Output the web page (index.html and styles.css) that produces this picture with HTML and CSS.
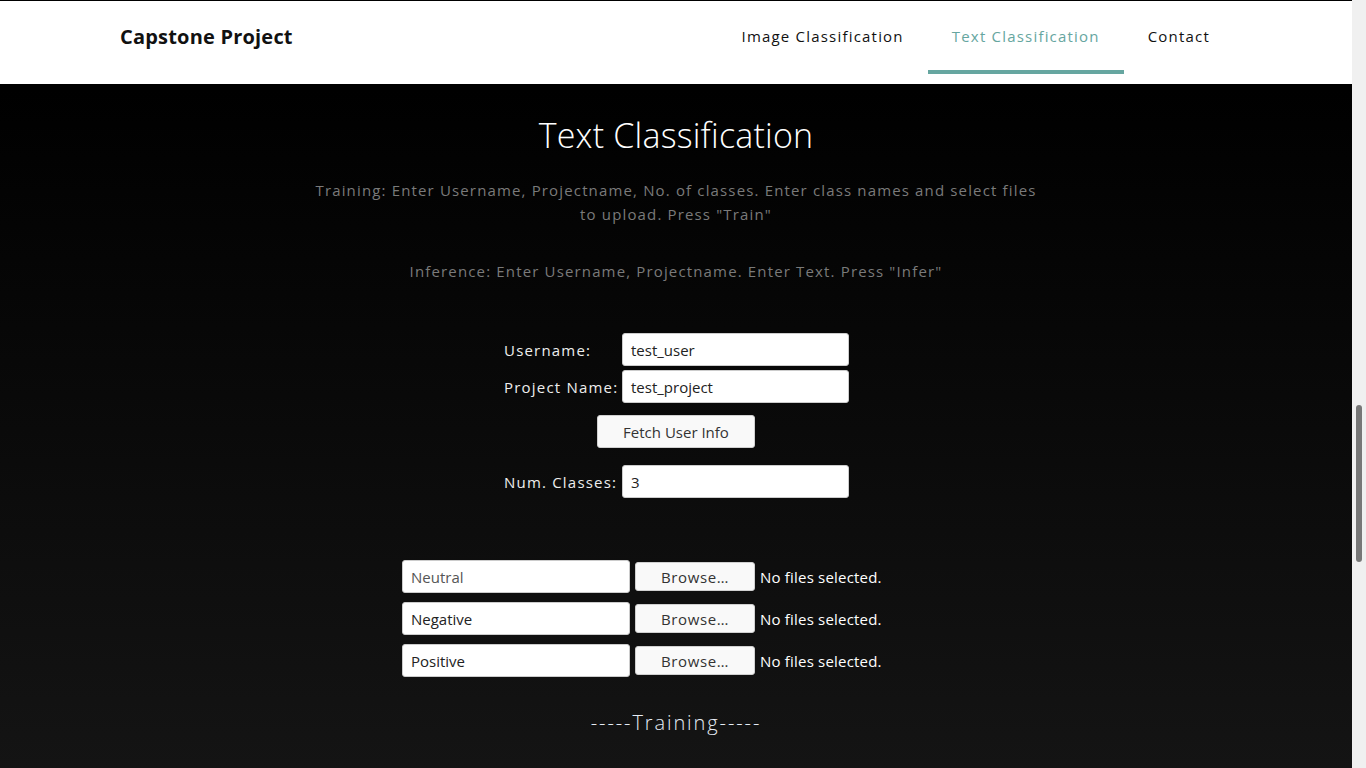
FILE: index.html
```html
<!DOCTYPE html>
<html lang="en">
<head>
<meta charset="utf-8">
<title>Text Classification</title>
<link rel="stylesheet" href="styles.css">
</head>
<body>
<div class="page">
  <header class="topbar">
    <div class="brand">Capstone Project</div>
    <nav class="nav">
      <a class="nav-item">Image Classification</a>
      <a class="nav-item active">Text Classification</a>
      <a class="nav-item">Contact</a>
    </nav>
  </header>
  <main class="content">
    <h1 class="title">Text Classification</h1>
    <p class="desc">Training: Enter Username, Projectname, No. of classes. Enter class names and select files to upload. Press "Train"</p>
    <p class="desc desc-infer">Inference: Enter Username, Projectname. Enter Text. Press "Infer"</p>

    <div class="form">
      <div class="row">
        <label class="label">Username:</label>
        <div class="input">test_user</div>
      </div>
      <div class="row">
        <label class="label">Project Name:</label>
        <div class="input">test_project</div>
      </div>
      <div class="row row-btn">
        <div class="btn btn-fetch">Fetch User Info</div>
      </div>
      <div class="row row-num">
        <label class="label">Num. Classes:</label>
        <div class="input">3</div>
      </div>
    </div>

    <div class="classes">
      <div class="class-row">
        <div class="input input-class muted">Neutral</div>
        <div class="file">
          <div class="btn btn-browse">Browse…</div>
          <span class="file-status">No files selected.</span>
        </div>
      </div>
      <div class="class-row">
        <div class="input input-class">Negative</div>
        <div class="file">
          <div class="btn btn-browse">Browse…</div>
          <span class="file-status">No files selected.</span>
        </div>
      </div>
      <div class="class-row">
        <div class="input input-class">Positive</div>
        <div class="file">
          <div class="btn btn-browse">Browse…</div>
          <span class="file-status">No files selected.</span>
        </div>
      </div>
    </div>

    <h2 class="section">-----Training-----</h2>
  </main>
</div>
<div class="scrollbar"><div class="thumb"></div></div>
</body>
</html>
```

FILE: styles.css
```css
html, body {
  margin: 0;
  height: 768px;
  overflow: hidden;
}
body {
  display: flex;
  font-family: "Open Sans", "Lato", sans-serif;
  background: #f0f0f0;
}
.page {
  flex: 1;
  display: flex;
  flex-direction: column;
  background: linear-gradient(#000 0px, #000 90px, #141414 768px);
}
.topbar {
  height: 83px;
  border-top: 1px solid #000;
  background: #fff;
  display: flex;
  align-items: flex-start;
  justify-content: space-between;
  padding: 0 118px 0 120px;
}
.brand {
  font-weight: 700;
  font-size: 20px;
  letter-spacing: 0.2px;
  color: #111;
  margin-top: 22px;
}
.nav {
  display: flex;
}
.nav-item {
  display: block;
  padding: 25px 24px 0;
  height: 44px;
  font-size: 15px;
  letter-spacing: 1.2px;
  color: #111;
  border-bottom: 4px solid transparent;
}
.nav-item.active {
  color: #66a6a0;
  border-bottom-color: #66a6a0;
}
.content {
  display: flex;
  flex-direction: column;
  align-items: center;
}
.title {
  margin: 28px 0 0;
  font-size: 34px;
  font-weight: 300;
  color: #fff;
  letter-spacing: 0.2px;
}
.desc {
  width: 734px;
  margin: 20px 0 0;
  text-align: center;
  color: #7a7a7a;
  font-size: 15px;
  line-height: 24px;
  letter-spacing: 1.15px;
}
.desc-infer {
  margin-top: 33px;
}
.form {
  margin-top: 50px;
  width: 346px;
  display: flex;
  flex-direction: column;
  gap: 4px;
  margin-left: 2px;
}
.row {
  display: flex;
  align-items: center;
}
.row-btn {
  justify-content: center;
  margin-top: 8px;
  padding-right: 2px;
}
.row-num {
  margin-top: 13px;
}
.label {
  width: 118px;
  color: #eee;
  font-size: 15px;
  letter-spacing: 1.2px;
  white-space: nowrap;
}
.input {
  box-sizing: border-box;
  width: 227px;
  height: 33px;
  background: #fff;
  border: 1px solid #ccc;
  border-radius: 3px;
  padding: 0 8px;
  display: flex;
  align-items: center;
  font-size: 15px;
  color: #222;
}
.btn {
  box-sizing: border-box;
  background: #f9f9f9;
  border: 1px solid #d0d0d0;
  border-radius: 3px;
  color: #333;
  font-size: 15px;
  display: flex;
  align-items: center;
  justify-content: center;
}
.btn-fetch {
  width: 158px;
  height: 33px;
}
.classes {
  margin-top: 62px;
  display: flex;
  flex-direction: column;
  gap: 9px;
}
.class-row {
  display: flex;
  align-items: center;
  gap: 5px;
}
.input-class {
  width: 228px;
}
.muted {
  color: #555;
}
.file {
  width: 315px;
  display: flex;
  align-items: center;
  gap: 5px;
}
.btn-browse {
  width: 120px;
  height: 29px;
  letter-spacing: 0.6px;
}
.file-status {
  color: #fff;
  font-size: 15px;
  letter-spacing: 0.2px;
}
.section {
  margin: 32px 0 0;
  font-size: 20px;
  font-weight: 300;
  color: #e6ecf5;
  letter-spacing: 1.9px;
}
.scrollbar {
  width: 14px;
  background: #f0f0f0;
  padding-top: 405px;
  box-sizing: border-box;
  display: flex;
  justify-content: center;
}
.thumb {
  width: 6px;
  height: 157px;
  border-radius: 3px;
  background: #777;
}
```
